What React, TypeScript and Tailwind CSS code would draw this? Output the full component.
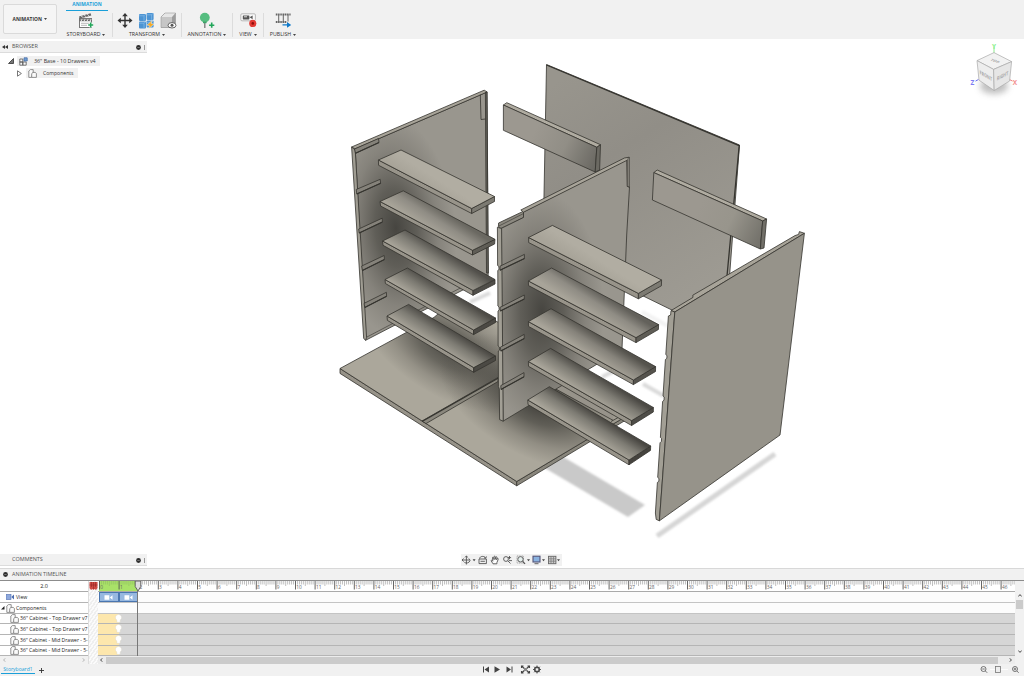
import React from "react";

type Pt = [number, number];
const pts = (p: Pt[]) => p.map((q) => q.join(",")).join(" ");

const EDGE = "#35342f";

/* Each shelf: left, back, right, front corners of the top face, then the lower left, front and right corners. */
const shelves: { top: Pt[]; low: Pt[]; dark: string; mid: string; end: string }[] = [
  { top: [[378.4, 160], [401, 150], [494.5, 196.5], [471.7, 208.5]], low: [[378.6, 165.3], [471.7, 213.5], [494.5, 201.5]], dark: "#b1ada2", mid: "#b1ada2", end: "#7c7a72" },
  { top: [[380, 201.5], [403.3, 190.8], [495, 239.3], [472.5, 250.3]], low: [[380.6, 206], [472.5, 255], [494.6, 244]], dark: "#6a6861", mid: "#8f8c84", end: "#5f5d56" },
  { top: [[382.6, 241], [405, 230], [495, 279.5], [473, 290.5]], low: [[383, 245.3], [473, 295.3], [495, 284]], dark: "#52504b", mid: "#7f7d75", end: "#504e49" },
  { top: [[385, 279.5], [407.4, 268], [495.5, 318], [473.6, 330]], low: [[385.4, 283.5], [473.6, 334.6], [495.5, 322.5]], dark: "#4e4c47", mid: "#7b7971", end: "#4b4944" },
  { top: [[387, 316], [408.6, 304.4], [495.5, 356], [473.7, 367.6]], low: [[387.4, 320.4], [473.7, 372.3], [495.5, 360.5]], dark: "#4e4c47", mid: "#7d7b73", end: "#4b4944" },
  { top: [[528.6, 237.5], [552.4, 225.4], [661.6, 280], [638.4, 293.4]], low: [[528.7, 242.6], [638.4, 298.8], [661.4, 285.8]], dark: "#b1ada2", mid: "#b1ada2", end: "#7c7a72" },
  { top: [[528.4, 281], [551.6, 268], [658.6, 324.6], [636, 337.6]], low: [[528.5, 285.6], [636, 342.6], [658.4, 329.5]], dark: "#63615b", mid: "#8f8c84", end: "#5f5d56" },
  { top: [[528.4, 321.6], [551, 308.7], [655.6, 366.6], [633.4, 380]], low: [[528.5, 326.4], [633.4, 384.6], [655.5, 371.5]], dark: "#55534d", mid: "#85827a", end: "#55534d" },
  { top: [[528.4, 361.5], [550.6, 348.4], [653.4, 407.5], [631.6, 420.6]], low: [[528.5, 366.3], [631.6, 425.5], [653.3, 412]], dark: "#4c4a45", mid: "#7d7b73", end: "#4f4d48" },
  { top: [[527.8, 400], [549.4, 386.7], [650.7, 446], [629, 460]], low: [[528, 404.6], [629, 464.8], [650.5, 450.4]], dark: "#4a4843", mid: "#7d7b73", end: "#45433e" },
];

function Shelf({ i }: { i: number }) {
  const s = shelves[i];
  const [l, b, r, f] = s.top;
  const [ll, lf, lr] = s.low;
  const mx = (b[0] + r[0]) / 2 - 2;
  const my = (b[1] + r[1]) / 2 - 1;
  const id = "shelf" + i;
  return (
    <g stroke={EDGE} strokeWidth=".8" strokeLinejoin="round">
      <linearGradient id={id} gradientUnits="userSpaceOnUse" x1={mx} y1={my} x2={mx - 12} y2={my + 19}>
        <stop offset="0" stopColor={s.dark} />
        <stop offset=".45" stopColor={s.mid} />
        <stop offset="1" stopColor="#a8a499" />
      </linearGradient>
      <polygon points={pts([l, f, lf, ll])} fill="#98948a" />
      <polygon points={pts([f, r, lr, lf])} fill={s.end} />
      <polygon points={pts([l, b, r, f])} fill={`url(#${id})`} />
    </g>
  );
}

const leftSlots: Pt[][] = [
  [[354.5, 149], [378.5, 138.5], [379, 142.5], [355.5, 153.3]],
  [[356.2, 189.5], [380.2, 179.3], [380.6, 183.3], [356.8, 194]],
  [[358.7, 229], [382.2, 218.2], [382.4, 222], [359.2, 233]],
  [[361.7, 266], [384.2, 255.5], [384.4, 259.5], [362.4, 270.5]],
  [[364, 303.4], [386.4, 292.3], [386.6, 296.3], [364.8, 307.5]],
];
const midSlots: Pt[][] = [
  [[500, 266.2], [524.4, 254.4], [524.4, 258.6], [500, 270.2]],
  [[500, 307.4], [524.3, 295], [524.3, 299], [500.4, 311]],
  [[500.4, 347.2], [524.2, 334.4], [524.2, 338.6], [500.8, 351]],
  [[500.8, 385.6], [524, 372.6], [524, 376.8], [501, 389.4]],
];

function Ao({ id, t, o }: { id: string; t: string; o: number }) {
  return (
    <radialGradient id={id} gradientUnits="userSpaceOnUse" cx="0" cy="0" r="1" gradientTransform={t}>
      <stop offset="0" stopColor="#34332f" stopOpacity={o} />
      <stop offset=".35" stopColor="#3c3b36" stopOpacity={o * 0.75} />
      <stop offset=".7" stopColor="#45433e" stopOpacity={o * 0.28} />
      <stop offset="1" stopColor="#45433e" stopOpacity="0" />
    </radialGradient>
  );
}

function Scene() {
  const leftPanel: Pt[] = [[355.2, 148.8], [487, 92], [488.2, 273], [488, 277], [365.6, 340.3]];
  const midPanel: Pt[] = [[501, 228.5], [523.5, 217.5], [523.5, 212], [626.8, 159.5], [627.5, 186.5], [629.5, 187], [626.7, 235], [622, 349], [503, 421.2]];
  const base: Pt[] = [[340, 368.5], [434, 317.4], [457, 297.5], [640, 408], [516.7, 481.5]];
  return (
    <svg className="absolute inset-0 h-full w-full" viewBox="0 39 1024 529" fill="none">
      <defs>
        <filter id="soft" x="-20%" y="-20%" width="140%" height="140%"><feGaussianBlur stdDeviation="1.3" /></filter>
        <filter id="cubeSoft" x="-50%" y="-50%" width="200%" height="200%"><feGaussianBlur stdDeviation="3" /></filter>
        <Ao id="aoL" t="translate(396 228) rotate(-5) scale(60 112)" o={0.82} />
        <Ao id="aoM" t="translate(542 312) scale(62 120)" o={0.82} />
        <Ao id="aoB1" t="translate(448 348) rotate(31) scale(100 48)" o={0.8} />
        <Ao id="aoB2" t="translate(535 402) rotate(28) scale(105 54)" o={0.9} />
        <linearGradient id="back" gradientUnits="userSpaceOnUse" x1="560" y1="80" x2="700" y2="300">
          <stop offset="0" stopColor="#98958d" /><stop offset=".35" stopColor="#918e87" /><stop offset="1" stopColor="#9e9b93" />
        </linearGradient>
        <linearGradient id="rail1" gradientUnits="userSpaceOnUse" x1="535" y1="130" x2="596" y2="160">
          <stop offset="0" stopColor="#9c9890" /><stop offset=".5" stopColor="#918e86" /><stop offset="1" stopColor="#6c6a64" />
        </linearGradient>
        <linearGradient id="rail2" gradientUnits="userSpaceOnUse" x1="700" y1="205" x2="762" y2="236">
          <stop offset="0" stopColor="#9c9890" /><stop offset=".5" stopColor="#98958c" /><stop offset="1" stopColor="#74726b" />
        </linearGradient>
      </defs>

      <g filter="url(#soft)">
        <polygon points="560,455 645,505 628,517 543,467" fill="#c9c9c9" />
        <path d="M657 536 775 454" stroke="#d6d6d6" strokeWidth="5" />
        <path d="M470 302 490 293M602 377 614 371M643 384 664 396" stroke="#dadada" strokeWidth="4" />
        <path d="M642 312 668 326" stroke="#f2f2f2" strokeWidth="4" />
      </g>

      <g stroke={EDGE} strokeWidth=".8" strokeLinejoin="round">
        {/* back panel and rails */}
        <polygon points="546.5,64.5 739.5,145 725,336 543,247" fill="url(#back)" />
        <path d="M546.5 65 739.2 145.700 727 276" strokeWidth="1.3" />
        <polygon points="503.4,105 506.8,102.7 600.5,144.7 596.8,147.3" fill="#b0aca1" />
        <polygon points="503.4,105 596.8,147.3 595.2,172 503.4,130.3" fill="url(#rail1)" />
        <polygon points="596.8,147.3 600.5,144.7 599.6,170 595.2,172" fill="#6b6962" />
        <polygon points="653.8,172.6 657.2,170 766.6,219 762.7,221" fill="#b0aca1" />
        <polygon points="653.8,172.6 762.7,221 760.3,249 652.4,200" fill="url(#rail2)" />
        <polygon points="762.7,221 766.6,219 764,248 760.3,249" fill="#716f68" />

        {/* base */}
        <polygon points="340,368.5 516.7,481.5 516.7,485.8 340,373.4" fill="#979389" />
        <polygon points="516.7,481.5 640,408 640,411.5 516.7,485.8" fill="#89867c" />
        <polygon points={pts(base)} fill="#aba79b" />
        <polygon points={pts(base)} fill="url(#aoB1)" stroke="none" />
        <polygon points={pts(base)} fill="url(#aoB2)" stroke="none" />
        <polygon points="528,373 549,374 613,410 613,420.300 585,405" fill="#97938a" stroke="none" />
        <polygon points="422,421 498,377.5 498,381.5 426,423.6" fill="#8a877d" />
        <path d="M422 421.5 498 378.2" strokeWidth="1.3" />
        <path d="M540 380.5 613 420.3M611 421.500 620 416.500" />

        {/* left side */}
        <polygon points={pts(leftPanel)} fill="#99968e" />
        <polygon points={pts(leftPanel)} fill="url(#aoL)" stroke="none" />
        <polygon points="351.6,147 484.2,90.2 487.2,92 355.2,148.8" fill="#a8a499" />
        <polygon points="351.6,147 355.2,150 366.6,337.5 365.6,340.3 363.7,338.5" fill="#9f9c92" />
        <path d="M366.6 337.2 487 274" strokeWidth=".6" />
        <polygon points="485.4,92.5 487,92 488.3,273 486.5,273" fill="#66645d" />
        <path d="M480.3 94.5 481 119.5 485.5 119" />
        {leftSlots.map((s, i) => (<polygon key={i} points={pts(s)} fill="#85827a" />))}
        {leftSlots.map((s, i) => (<path key={i} d={`M${s[3].join(" ")} ${s[2].join(" ")}`} strokeWidth="1.1" />))}
      </g>
      {[4, 3, 2, 1, 0].map((i) => (<Shelf key={i} i={i} />))}

      <g stroke={EDGE} strokeWidth=".8" strokeLinejoin="round">
        {/* divider */}
        <polygon points="498.4,226.6 498.6,223 523.5,211.2 523.5,217.5 501,228.5" fill="#8c8980" />
        <polygon points={pts(midPanel)} fill="#99968e" />
        <polygon points={pts(midPanel)} fill="url(#aoM)" stroke="none" />
        <polygon points="520.8,210 624.4,158 629.2,157.2 626.8,160.4 523.5,212.2" fill="#a8a499" />
        <path d="M498.6 226.2 523.4 213.6" strokeWidth=".6" />
        <path d="M629.2 157.2V187L627.2 186.4V160" fill="#9b988f" />
        <path d="M497.4 227.2 501.6 228.6 503.2 421.2 499.6 419.6 499.3 389 498.4 386.5 498.3 351 499.5 350.2 499.3 347 498.1 346 498 311 499.2 310 499 307 497.9 306 497.8 270.4 499 269.4 498.8 266.4 497.6 265.5Z" fill="#a29f95" />
        {midSlots.map((s, i) => (<polygon key={i} points={pts(s)} fill="#85827a" />))}
        {midSlots.map((s, i) => (<path key={i} d={`M${s[3].join(" ")} ${s[2].join(" ")}`} strokeWidth="1.1" />))}
      </g>
      {[9, 8, 7, 6, 5].map((i) => (<Shelf key={i} i={i} />))}

      <g stroke={EDGE} strokeWidth=".8" strokeLinejoin="round">
        {/* right side */}
        <path d="M671 310.6 693 297.4 692.8 295.2 795 235.6 798.6 234.4 799.4 231.6 804.4 233.3 674.8 312Z" fill="#a8a499" />
        <path d="M671 310.6 674.8 312 659.4 520.8 656.2 519.4 655.4 513 657.4 482.4 658.8 481.4 659 478.6 657.7 477.4 660 442.8 661.4 441.4 661.6 438.5 660.4 437.4 662.6 401.4 664 400.2 664.2 397 663 396 665.4 359.5 666.8 358.4 667 355.6 665.8 354.6 668.4 316 670.6 315Z" fill="#a29f95" />
        <polygon points="674.8,312 804.4,233.3 780,435 659.4,520.8" fill="#96938a" />
      </g>

      {/* view cube */}
      <ellipse cx="994" cy="86" rx="14" ry="8" fill="#aaa" opacity=".75" filter="url(#cubeSoft)" />
      <path d="M994 53V47" stroke="#8cec8c" />
      <path d="M978.5 79.5l-3 1.6" stroke="#6a6af0" />
      <path d="M1009.5 79.5l3 1.6" stroke="#f08080" />
      <g stroke="#a9a9a9" strokeWidth=".7" strokeLinejoin="round">
        <path d="M994 52.6 1011.6 61.6 993.6 69.4 977 60.6Z" fill="#f2f2f2" />
        <path d="M977 60.6 993.6 69.4 994.2 90.5 979 80.2Z" fill="#ededed" />
        <path d="M993.6 69.4 1011.6 61.6 1009.6 81 994.2 90.5Z" fill="#e6e6e6" />
      </g>
      <g fontFamily="Open Sans, sans-serif" fontWeight="700" fill="#a6a6a6" textAnchor="middle">
        <text transform="matrix(.8 .3 -.6 .5 994 62)" fontSize="5">TOP</text>
        <text transform="matrix(.66 .38 .05 1 985.9 77.6)" fontSize="5.4">FRONT</text>
        <text transform="matrix(.68 -.36 -.05 1 1002.4 77.8)" fontSize="5.4">RIGHT</text>
        <text x="994" y="48.5" fontSize="6.5" fill="#8df08d">Y</text>
        <text x="972.5" y="85" fontSize="6.5" fill="#7d7df2">Z</text>
        <text x="1015" y="85" fontSize="6.5" fill="#f28d8d">X</text>
      </g>
    </svg>
  );
}

const Caret = () => (
  <svg className="h-[2px] w-[3px] shrink-0" viewBox="0 0 3 2"><path d="M0 0h3L1.5 2z" fill="#444" /></svg>
);

const Clapper = () => (
  <svg width="16" height="17" viewBox="0 0 16 17" fill="none">
    <rect x="1.5" y="6.5" width="12" height="9" fill="#fff" stroke="#777" />
    <path d="M1 4.500 12.600 1.200l.7 2.400L1.700 6.800z" fill="#666" />
    <path d="m3.400 4 1.500 1.600M6.400 3.100l1.500 1.600M9.400 2.200l1.500 1.600" stroke="#eee" />
    <path d="M1.500 8.200h12" stroke="#666" strokeWidth="2" /><path d="m4 7.200-1 2M7 7.200l-1 2M10 7.200l-1 2M13 7.200l-1 2" stroke="#eee" />
    <path d="M3 11.300h9M3 13.300h6" stroke="#999" strokeWidth=".7" />
    <path d="M12.700 10.600v5M10.200 13.100h5" stroke="#fff" strokeWidth="2.600" /><path d="M12.700 10.600v5M10.200 13.100h5" stroke="#22a65a" strokeWidth="1.500" />
  </svg>
);
const Move = () => (
  <svg width="16" height="17" viewBox="0 0 16 17">
    <path d="M8 1 10.800 4.200H8.700v3.600h3.500V5.700L15.500 8.500l-3.300 2.800V9.200H8.700v3.600h2.100L8 16l-2.800-3.200h2.100V9.200H3.800v2.100L.5 8.500l3.300-2.800v2.100h3.500V4.200H5.200z" fill="#333" />
  </svg>
);
const Explode = () => (
  <svg width="17" height="17" viewBox="0 0 17 17">
    {[[1, 2], [8.6, 1], [1, 9.4], [8.6, 8.6]].map(([x, y]) => (
      <g key={x + "," + y}><rect x={x} y={y} width="7" height="7" rx="1" fill="#4d94d3" /><path d={`M${x} ${y + 1.8}h5v5M${x + 5} ${y + 1.8}l1.6-1.6`} stroke="#8fc3ec" strokeWidth=".6" fill="none" /></g>
    ))}
    <path d="m14 8.600-5 4.500 2.600.6-1 3 5.400-4.600-2.800-.7z" fill="#f7a922" stroke="#fff" strokeWidth=".4" />
  </svg>
);
const ShowHide = () => (
  <svg width="17" height="17" viewBox="0 0 17 17">
    <path d="M1 5 5 1h10.500v10.500L12 15.500H1z" fill="#9d9d9d" /><path d="M1 5 5 1h10.500L12 5z" fill="#e6e6e6" /><path d="M1 5h11v10.500H1z" fill="#c6c6c6" /><path d="M1 5 5 1h10.500v10.500L12 15.500H1z" fill="none" stroke="#888" strokeWidth=".5" />
    <ellipse cx="12" cy="13.300" rx="4" ry="2.700" fill="#fff" stroke="#555" strokeWidth=".9" /><circle cx="12" cy="13.300" r="1.500" fill="#555" />
  </svg>
);
const Balloon = () => (
  <svg width="16" height="17" viewBox="0 0 16 17" fill="none">
    <path d="M5.800 10v6" stroke="#777" strokeWidth="1.300" /><circle cx="5.800" cy="5.600" r="4.900" fill="#56bd80" /><path d="M4 9.600h3.600v1.600H4z" fill="#3da268" />
    <path d="M12.700 10.600v5.200M10.100 13.200h5.200" stroke="#22a65a" strokeWidth="1.600" />
  </svg>
);
const ViewCam = () => (
  <svg width="17" height="17" viewBox="0 0 17 17">
    <rect x=".8" y="1.800" width="14.600" height="7" rx="1.200" fill="#fafafa" stroke="#aaa" strokeWidth=".8" /><rect x="2.800" y="3.400" width="6.600" height="4" rx=".6" fill="#555" /><path d="m9.600 5.300 3-1.700v3.600z" fill="#555" /><path d="M4 4.800h3" stroke="#fff" strokeWidth=".8" />
    <circle cx="12.800" cy="11.400" r="3.600" fill="#e33b35" /><circle cx="12.800" cy="11.400" r="1.300" fill="#8f0e0a" />
  </svg>
);
const Film = () => (
  <svg width="17" height="17" viewBox="0 0 17 17" fill="none">
    <path d="M.8 2.500h15M.8 10h11" stroke="#666" strokeWidth="1.800" strokeDasharray="1.300 .5" />
    <path d="M3.700 2.500v8M8.300 2.500v8M13 2.500v7" stroke="#666" /><path d="M7.500 12.300h4.500v-2.300l4.200 2.900-4.200 2.900v-2.200H7.500z" fill="#0f79c9" />
  </svg>
);

function Group({ w, label, last, children }: { w: string; label: string; last?: boolean; children: React.ReactNode }) {
  return (
    <div className={`mt-[2px] flex h-[24px] shrink-0 flex-col items-center ${w} ${last ? "" : "border-r border-[#dcdcdc]"}`}>
      <div className="-mt-[1px] flex h-[19px] shrink-0 items-start gap-[5px]">{children}</div>
      <div className="flex h-[7px] shrink-0 items-center gap-[2px] whitespace-nowrap text-[5.250px] leading-none text-[#333]">{label}<Caret /></div>
    </div>
  );
}

function Toolbar() {
  return (
    <header className="flex h-[39px] shrink-0 bg-[#f1f1f1]">
      <div className="flex w-[60px] shrink-0 pl-[3px] pt-[4px]">
        <div className="flex h-[30px] w-[54px] items-center justify-center gap-[2.5px] rounded-[2px] border border-[#dadada] bg-[#f5f5f5] text-[4.900px] font-bold text-[#333]">ANIMATION<Caret /></div>
      </div>
      <div className="flex flex-col">
        <div className="ml-[6px] h-[11px] w-[42px] border-b-[1.5px] border-[#1a9fd9] pt-[1px] text-center text-[4.900px] font-bold leading-[6px] text-[#1a9fd9]">ANIMATION</div>
        <div className="flex h-[28px]">
          <Group w="w-[53px]" label="STORYBOARD"><Clapper /></Group>
          <Group w="w-[69px]" label="TRANSFORM"><Move /><Explode /><ShowHide /></Group>
          <Group w="w-[51px]" label="ANNOTATION"><Balloon /></Group>
          <Group w="w-[31px]" label="VIEW"><ViewCam /></Group>
          <Group w="w-[38px]" label="PUBLISH" last><Film /></Group>
        </div>
      </div>
    </header>
  );
}

const Dot = () => (
  <svg className="h-[5px] w-[5px] shrink-0" viewBox="0 0 5 5"><circle cx="2.5" cy="2.5" r="2.4" fill="#2d2d2d" /><path d="M1.3 2.5h2.4" stroke="#aaa" strokeWidth=".6" /></svg>
);
const Part = () => (
  <svg className="h-[9px] w-[9px] shrink-0" viewBox="0 0 9 9" fill="#fafafa" stroke="#777" strokeWidth=".8"><path d="M.8 2 2.4.6h2.8V3.4L3.6 8.4H.8z" /><path d="M3.7 4.6 5 3.400h2.200l1.200 1v4H3.700z" /></svg>
);

function PanelBar({ label, arrows }: { label: string; arrows?: boolean }) {
  return (
    <div className="flex h-[12px] w-[147px] items-center border-b border-[#dcdcdc] bg-[#f1f1f1] pt-[1px] text-[5.5px] text-[#555]">
      <div className="flex w-[12px] pl-[2px]">{arrows && <svg width="6" height="4" viewBox="0 0 6 4"><path d="M3 0v4L0 2zM6 0v4L3 2z" fill="#333" /></svg>}</div>
      <span className="grow">{label}</span>
      <Dot />
      <span className="ml-[3px] mr-[2px] h-[5px] w-[1px] bg-[#999]" />
    </div>
  );
}

function NavBar() {
  return (
    <div className="flex h-[12px] w-[101px] items-center bg-[#f1f1f1]">
      <svg width="101" height="12" viewBox="0 0 101 12" fill="none" stroke="#555" strokeWidth=".9">
        <path d="M1 6h8M5.400 2v8.500M2.600 4.500 1 6l1.600 1.500M4 3.400 5.400 2l1.500 1.400M3.400 8.400C5 9.600 8.500 9 9 6.600M7.600 4.500 9.400 6.200" />
        <g fill="#444" stroke="none"><path d="M11.600 5.300h3l-1.500 2zM66 5.300h3l-1.500 2zM81 5.300h3l-1.500 2zM96 5.300h3l-1.500 2z" /></g>
        <path d="M18 5h7.400v4.600H18zM19.500 7.300h4.400M18.600 4.600c0-2.600 5-3 6-.6M23 3.800l1.800.6.6-2" />
        <path d="M32 9.800 30 6.600c.6-.6 1.200-.2 1.800.6L31.500 3.400c.7-.5 1.100.2 1.200 1l.3 1.200V2.400c.8-.5 1.200 0 1.200.8v2.200l.7-2.600c.8-.3 1.100.2 1 1L35.600 5.800l.9-1.500c.8 0 .9.500.7 1.100L35.900 8.600V9.800Z" fill="#fff" />
        <circle cx="45" cy="5" r="2.400" /><path d="m46.800 6.800 2.700 2.700M48.500 2v3.200M46.900 3.600h3.200M48 6.600h3" />
        <rect x="56" y="2" width="6.500" height="7" stroke="#999" strokeDasharray="1 .7" /><circle cx="59.500" cy="5.300" r="2.700" fill="#e6f0ee" /><path d="m61.600 7.400 2.400 2.500" strokeWidth="1.300" />
        <rect x="72" y="2.200" width="7" height="5.800" fill="#8ab2e0" stroke="#557" strokeWidth="1.100" /><path d="M73.500 9.700h4" />
        <rect x="87.500" y="2.300" width="7.400" height="7.400" fill="#ccc" stroke="#666" /><path d="M90 2.300v7.400M92.500 2.300v7.400M87.500 4.800h7.400M87.500 7.200h7.400" stroke="#777" strokeWidth=".7" />
      </svg>
    </div>
  );
}

function Viewport() {
  return (
    <main className="relative h-[529px] shrink-0 overflow-hidden bg-white">
      <Scene />
      <div className="relative flex h-full flex-col justify-between pb-[2px] pt-[2px]">
        <div className="flex flex-col">
          <PanelBar label="BROWSER" arrows />
          <div className="mt-[3px] flex h-[10px] items-center text-[#333]">
            <svg className="ml-[8px] h-[6px] w-[6px]" viewBox="0 0 6 6"><path d="M5.500.5v5H.5z" fill="#777" stroke="#333" strokeWidth=".8" /></svg>
            <div className="ml-[3px] flex h-[10px] items-center bg-[#f1f1f1] pl-[2px] pr-[4px]">
              <svg width="9" height="9" viewBox="0 0 9 9" fill="#f8f8f8" stroke="#555" strokeWidth=".8"><path d="M.8 2h3v3h-3zM.8 5h3v3.200h-3zM3.800 5h3.400v3.200H3.800z" /><path d="M5 .8h3.200V4H5z" fill="#6f9fd8" stroke="#4a6fa5" /></svg>
              <span className="ml-[6px] whitespace-nowrap pt-[1px] text-[5.350px]">36" Base - 10 Drawers v4</span>
            </div>
          </div>
          <div className="mt-[2px] flex h-[10px] items-center text-[#333]">
            <svg className="ml-[17px] h-[7px] w-[5px]" viewBox="0 0 5 7"><path d="M.5.8 4.400 3.500.5 6.200z" fill="#fff" stroke="#555" strokeWidth=".8" /></svg>
            <div className="ml-[4px] flex h-[10px] items-center bg-[#f1f1f1] pl-[2px] pr-[4px]">
              <Part />
              <span className="ml-[6px] pt-[1px] text-[5.100px]">Components</span>
            </div>
          </div>
        </div>
        <div className="flex items-center">
          <PanelBar label="COMMENTS" />
          <div className="ml-[314px]"><NavBar /></div>
        </div>
      </div>
    </main>
  );
}

const STEP = 19.6;
function Ruler() {
  const secs = Array.from({ length: 47 }, (_, i) => i);
  return (
    <svg className="block" width="917" height="10" viewBox="98 0 917 10">
      <rect x="99" width="39" height="10" fill="#a9e268" />
      {secs.map((s) => {
        const x = 99 + s * STEP + 0.5;
        return (
          <g key={s}>
            {Array.from({ length: 9 }, (_, k) => x + ((k + 1) * STEP) / 10).filter((v) => v < 1015).map((v, k) => (
              <path key={k} d={`M${v} 0v${k === 4 ? 5 : 3.5}`} stroke={s < 2 ? "#92bf63" : "#a5a5a5"} strokeWidth=".7" />
            ))}
            <path d={`M${x} 0v8.500`} stroke="#555" strokeWidth=".9" />
            <text x={x + 0.8} y="7.500" fontSize="4.800" fill="#666" fontFamily="Open Sans, sans-serif">{s}</text>
          </g>
        );
      })}
      <path d="M135.200 0h5.600v5.500L138 10l-2.800-4.500z" fill="#ddd" stroke="#555" strokeWidth=".9" />
    </svg>
  );
}

const ViewBox = () => (
  <div className="flex h-[10px] w-[19.5px] items-center justify-center border border-[#4a76b0] bg-[#97b8e0]">
    <svg width="9" height="5" viewBox="0 0 9 5"><path d="M.5.3h4.800v4.400H.5zM5.800 2.500 8.500.3v4.400z" fill="#fff" /></svg>
  </div>
);

const parts = [
  { name: '36" Cabinet - Top Drawer v7', h: "h-[10px]" },
  { name: '36" Cabinet - Top Drawer v7', h: "h-[11px]" },
  { name: '36" Cabinet - Mid Drawer - 5-', h: "h-[11px]" },
  { name: '36" Cabinet - Mid Drawer - 5-', h: "h-[10px]" },
];

function Timeline() {
  return (
    <section className="flex h-[108px] shrink-0 flex-col bg-[#f1f1f1] text-[#222]">
      <div className="flex h-[13px] shrink-0 items-center border-b border-t border-b-[#8c8c8c] border-t-[#d8d8d8] pl-[3px] text-[5.5px] text-[#555]"><Dot /><span className="ml-[4px] text-[5.350px]">ANIMATION TIMELINE</span></div>
      <div className="flex h-[83px] shrink-0">
        <div className="flex w-[88px] shrink-0 flex-col bg-white text-[5.500px]">
          <div className="flex h-[11px] shrink-0 items-center justify-center border-b border-[#aaa] pt-[1px]">2.0</div>
          <div className="flex h-[11px] shrink-0 items-center border-b border-[#b5b5b5] pl-[6px]">
            <svg width="8" height="6" viewBox="0 0 8 6"><rect y=".5" width="5" height="5" fill="#8ea8dc" stroke="#4d6cb0" strokeWidth=".6" /><path d="M5.300 3 8 .5v5z" fill="#4d6cb0" /></svg>
            <span className="ml-[2px] pt-[1px] text-[5.200px]">View</span>
          </div>
          <div className="flex h-[11px] shrink-0 items-center border-b border-[#b5b5b5] pl-[1px]">
            <svg width="4" height="4" viewBox="0 0 4 4"><path d="M3.500 0v3.500H0z" fill="#222" /></svg>
            <span className="ml-[1px] flex"><Part /></span><span className="ml-[1px] pt-[1px] text-[5.100px]">Components</span>
          </div>
          {parts.map((p, i) => (
            <div key={i} className={`flex shrink-0 items-center border-b border-[#b5b5b5] pl-[10px] ${p.h}`}>
              <Part /><span className={`ml-[1px] whitespace-nowrap pt-[1px] ${i > 1 ? "text-[5.050px]" : "text-[5.200px]"}`}>{p.name}</span>
            </div>
          ))}
          <div className="flex h-[8px] shrink-0 items-center justify-between bg-[#f1f1f1] px-[3px]">
            <svg width="3" height="4" viewBox="0 0 3 4" fill="none" stroke="#aaa" strokeWidth=".8"><path d="M2.500.3.500 2l2 1.700" /></svg>
            <svg width="3" height="4" viewBox="0 0 3 4" fill="none" stroke="#aaa" strokeWidth=".8"><path d="m.5.3 2 1.700-2 1.700" /></svg>
          </div>
        </div>
        <div className="flex w-[10px] shrink-0 flex-col border-l border-[#ddd] bg-[repeating-linear-gradient(125deg,#fbfbfb_0px,#fbfbfb_1.5px,#efefef_1.500px,#efefef_3px)]">
          <svg width="9" height="10" viewBox="0.500 0 9 10"><path d="M1 1h8V7L7.500 9 6 8 5 9 4 8 2.500 9 1 7z" fill="#cf4a44" /><path d="M1 4h8M3 1V6M5 1V8M7 1V6" stroke="#8d2320" strokeWidth=".5" /></svg>
        </div>
        <div className="relative flex w-[917px] shrink-0 flex-col bg-[#fcfcfc]">
          <div className="h-[11px] shrink-0 border-b border-[#aaa] bg-white"><Ruler /></div>
          <div className="flex h-[11px] shrink-0 border-b border-[#c4c4c4] pl-[1px]"><ViewBox /><ViewBox /></div>
          <div className="h-[11px] shrink-0 border-b border-[#c4c4c4]" />
          {parts.map((p, i) => (
            <div key={i} className={`flex shrink-0 border-b border-[#b5b5b5] bg-[#d6d6d6] ${p.h}`}>
              <div className="w-[21px] shrink-0 bg-[#fde7ad]" />
              <svg className="relative -ml-[4px] shrink-0" width="7" height="9" viewBox="0 0 7 9"><path d="M3.500.5a3 3 0 0 1 1.700 5.500V8.300H1.800V6A3 3 0 0 1 3.500.5z" fill="#fff" stroke="#d9d4c4" strokeWidth=".4" /></svg>
            </div>
          ))}
          <div className="flex h-[8px] shrink-0 items-center bg-[#ececec] pl-[2px] pr-[3px]">
            <svg width="3" height="4" viewBox="0 0 3 4" fill="none" stroke="#444" strokeWidth=".9"><path d="M2.500.3.500 2l2 1.700" /></svg>
            <span className="ml-[3px] h-[7px] w-[892px] bg-[#cbcbcb]" />
            <svg className="ml-auto" width="3" height="4" viewBox="0 0 3 4" fill="none" stroke="#444" strokeWidth=".9"><path d="m.5.3 2 1.700-2 1.700" /></svg>
          </div>
          <div className="absolute left-[39px] top-[10px] h-[65px] w-[1px] bg-[#777]" />
        </div>
        <div className="flex w-[9px] shrink-0 flex-col items-center pt-[13px]">
          <svg width="4" height="3" viewBox="0 0 4 3" fill="none" stroke="#333" strokeWidth=".9"><path d="M.3 2.500 2 .6l1.700 1.900" /></svg>
          <span className="mt-[3px] h-[9px] w-[7px] shrink-0 bg-[#cbcbcb]" />
          <svg className="mb-[11px] mt-auto" width="4" height="3" viewBox="0 0 4 3" fill="none" stroke="#333" strokeWidth=".9"><path d="M.3.5 2 2.400 3.700.5" /></svg>
        </div>
      </div>
      <div className="flex h-[12px] shrink-0 items-center">
        <div className="ml-[1px] h-[10px] w-[34px] self-start border-b-[1.5px] border-[#1a9fd9] text-center text-[5.100px] leading-[11px] text-[#1a9fd9]">Storyboard1</div>
        <svg className="ml-[4px]" width="5" height="5" viewBox="0 0 5 5"><path d="M2.500 0v5M0 2.500h5" stroke="#333" strokeWidth=".9" /></svg>
        <svg className="-mt-[1px] ml-[439px]" width="60" height="9" viewBox="0 0 60 9" fill="#444">
          <path d="M0 1.500h1v6H0zM6 1.500v6l-4.500-3zM11.500 1.200v6.600l5.500-3.300zM23.500 1.500v6l4.500-3zM28.500 1.500h1v6h-1z" />
          <path d="M38.500 3V1h2M44.500 1h2v2M46.500 6v2h-2M40.500 8h-2V6M39 1.500l7 6M46 1.500l-7 6" stroke="#444" strokeWidth="1.100" fill="none" /><rect x="41" y="3" width="3" height="3" fill="#888" />
          <circle cx="54" cy="4.500" r="2.400" fill="none" stroke="#444" strokeWidth="1.300" /><path d="M54 .5v8M50 4.500h8M51.200 1.700l5.600 5.600M56.800 1.700l-5.600 5.600" stroke="#444" strokeWidth=".9" /><circle cx="54" cy="4.500" r="1.300" fill="#f1f1f1" />
        </svg>
        <svg className="-mt-[1px] ml-auto mr-[4px]" width="40" height="9" viewBox="0 0 40 9" fill="none" stroke="#555" strokeWidth=".8">
          <circle cx="3.500" cy="4" r="2.500" /><path d="M2.300 4h2.400M5.400 6l1.800 1.800" /><path d="M10 4.500h18" stroke="#fff" /><rect x="15.500" y="1.500" width="5" height="6" fill="#eee" stroke="#777" /><circle cx="35" cy="4" r="2.500" /><path d="M33.800 4h2.400M35 2.800v2.400M36.900 6l1.800 1.800" />
        </svg>
      </div>
    </section>
  );
}

export default function App() {
  return (
    <div className="flex h-[678px] w-[1024px] flex-col overflow-hidden bg-white font-['Open_Sans',sans-serif] leading-none">
      <Toolbar />
      <Viewport />
      <Timeline />
    </div>
  );
}
